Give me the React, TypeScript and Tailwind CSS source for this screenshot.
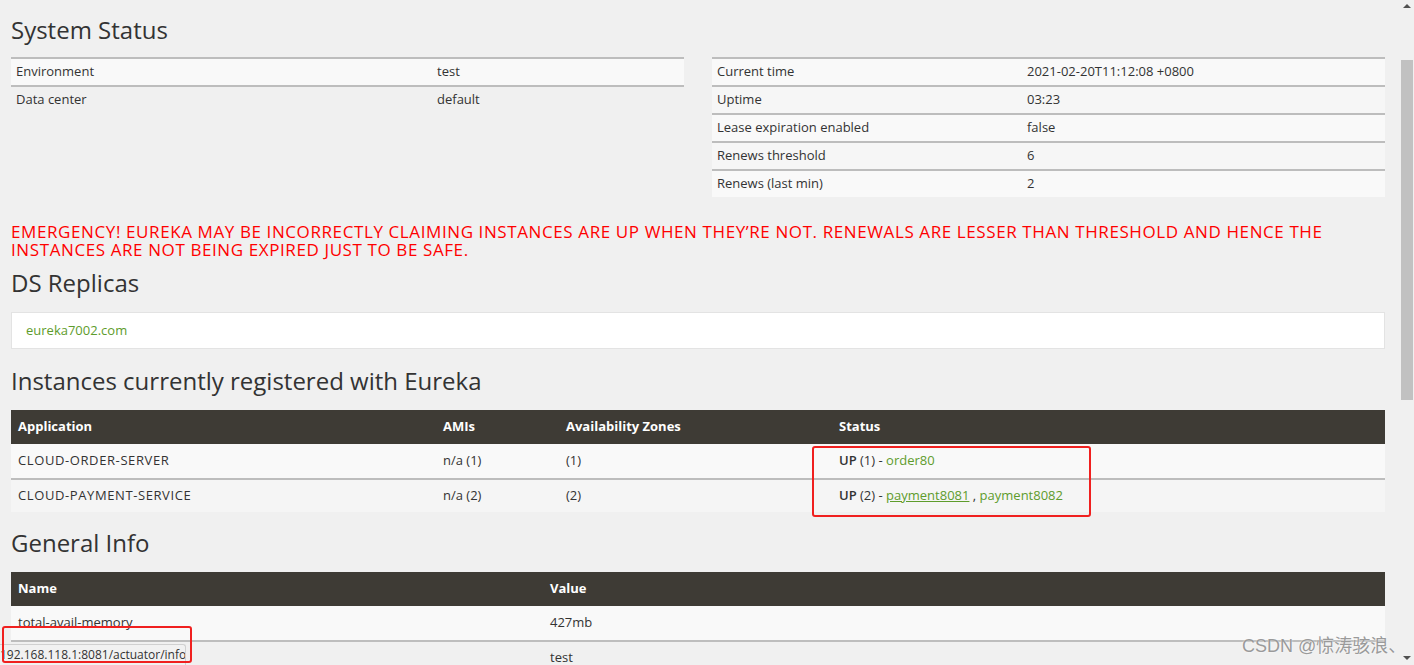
const green = "text-[#5e9c2c]";

type Pair = [string, string];

const leftInfo: Pair[] = [
	["Environment", "test"],
	["Data center", "default"],
];

const rightInfo: Pair[] = [
	["Current time", "2021-02-20T11:12:08 +0800"],
	["Uptime", "03:23"],
	["Lease expiration enabled", "false"],
	["Renews threshold", "6"],
	["Renews (last min)", "2"],
];

const Heading = ({ children }: { children: React.ReactNode }) => (
	<h2 className="text-[24px] leading-[24px] text-[#333] font-['Open_Sans',sans-serif]">
		{children}
	</h2>
);

const KeyValueTable = ({
	rows,
	keyWidth,
	stripeAll,
}: {
	rows: Pair[];
	keyWidth: string;
	stripeAll?: boolean;
}) => (
	<div className="flex-1 flex flex-col">
		{rows.map(([k, v], i) => (
			<div
				key={k}
				className={`flex h-[28px] items-center border-t-2 border-[#bdbdbd] text-[13px] text-[#333] ${
					i % 2 === 0 ? "bg-[#f9f9f9]" : stripeAll ? "bg-[#f6f6f6]" : ""
				}`}
			>
				<div className={`${keyWidth} pl-[5px]`}>{k}</div>
				<div className="flex-1 pl-[5px]">{v}</div>
			</div>
		))}
	</div>
);

const DarkHeader = ({ cols }: { cols: { label: string; w: string }[] }) => (
	<div className="flex h-[34px] items-center bg-[#3e3b35] text-[13px] font-bold text-white">
		{cols.map((c) => (
			<div key={c.label} className={`${c.w} pl-[7px]`}>
				{c.label}
			</div>
		))}
	</div>
);

export default function App() {
	return (
		<div className="relative flex h-[665px] w-[1414px] overflow-hidden bg-[#f0f0f0] font-['Open_Sans',sans-serif]">
			<main className="flex-1 pl-[11px] pr-[15px] pt-[18px]">
				<Heading>System Status</Heading>

				<div className="mt-[15px] flex gap-[28px]">
					<KeyValueTable rows={leftInfo} keyWidth="w-[421px]" />
					<KeyValueTable rows={rightInfo} keyWidth="w-[310px]" stripeAll />
				</div>

				<p className="mt-[26px] whitespace-nowrap text-[17px] font-medium leading-[18px] tracking-[0.6px] text-[#ff0000] font-['Open_Sans',sans-serif]">
					EMERGENCY! EUREKA MAY BE INCORRECTLY CLAIMING INSTANCES ARE UP WHEN
					THEY’RE NOT. RENEWALS ARE LESSER THAN THRESHOLD AND HENCE THE
					<br />
					INSTANCES ARE NOT BEING EXPIRED JUST TO BE SAFE.
				</p>

				<div className="mt-[12px]">
					<Heading>DS Replicas</Heading>
				</div>
				<div className="mt-[17px] flex h-[37px] items-center border border-[#e3e3e3] bg-white pl-[14px] text-[13px]">
					<a className={green}>eureka7002.com</a>
				</div>

				<div className="mt-[20px]">
					<Heading>Instances currently registered with Eureka</Heading>
				</div>
				<div className="mt-[17px]">
					<DarkHeader
						cols={[
							{ label: "Application", w: "w-[425px]" },
							{ label: "AMIs", w: "w-[123px]" },
							{ label: "Availability Zones", w: "w-[273px]" },
							{ label: "Status", w: "flex-1" },
						]}
					/>
					<div className="flex h-[34px] items-center bg-[#f9f9f9] text-[13px] text-[#333]">
						<div className="w-[425px] pl-[7px] font-medium tracking-[0.6px]">CLOUD-ORDER-SERVER</div>
						<div className="w-[123px] pl-[7px]">n/a (1)</div>
						<div className="w-[273px] pl-[7px]">(1)</div>
						<div className="flex-1 pl-[7px]">
							<b className="font-semibold">UP</b> (1) -{" "}
							<a className={green}>order80</a>
						</div>
					</div>
					<div className="flex h-[34px] items-center border-t-2 border-[#bdbdbd] bg-[#f5f5f5] text-[13px] text-[#333]">
						<div className="w-[425px] pl-[7px] font-medium tracking-[0.6px]">CLOUD-PAYMENT-SERVICE</div>
						<div className="w-[123px] pl-[7px]">n/a (2)</div>
						<div className="w-[273px] pl-[7px]">(2)</div>
						<div className="flex-1 pl-[7px]">
							<b className="font-semibold">UP</b> (2) -{" "}
							<a className={`${green} underline`}>payment8081</a> ,{" "}
							<a className={green}>payment8082</a>
						</div>
					</div>
				</div>

				<div className="mt-[19px]">
					<Heading>General Info</Heading>
				</div>
				<div className="mt-[17px]">
					<DarkHeader
						cols={[
							{ label: "Name", w: "w-[532px]" },
							{ label: "Value", w: "flex-1" },
						]}
					/>
					<div className="flex h-[34px] items-center bg-[#f9f9f9] text-[13px] text-[#333]">
						<div className="w-[532px] pl-[7px]">total-avail-memory</div>
						<div className="flex-1 pl-[7px]">427mb</div>
					</div>
					<div className="flex h-[34px] items-center border-t-2 border-[#bdbdbd] text-[13px] text-[#333]">
						<div className="w-[532px] pl-[7px]" />
						<div className="flex-1 pl-[7px]">test</div>
					</div>
				</div>
			</main>

			{/* fake scrollbar */}
			<div className="flex w-[14px] flex-col items-center bg-[#f0f0f0]">
				<div className="mt-[4px] h-0 w-0 border-x-[4px] border-b-[4px] border-x-transparent border-b-[#505050]" />
				<div className="mt-[52px] h-[340px] w-[12px] bg-[#c1c1c1]" />
				<div className="flex-1" />
				<div className="mb-[5px] h-0 w-0 border-x-[4px] border-t-[4px] border-x-transparent border-t-[#505050]" />
			</div>

			{/* browser status bar */}
			<div className="absolute bottom-0 left-0 flex h-[21px] w-[186px] items-center overflow-hidden rounded-tr-[3px] border-r border-t border-[#d0d0d0] bg-[#f1f1f1] text-[12px] text-[#333]">
				<span className="whitespace-nowrap">192.168.118.1:8081/actuator/info</span>
			</div>

			{/* annotation boxes */}
			<div className="absolute left-[812px] top-[446px] h-[71px] w-[279px] rounded-[3px] border-2 border-[#f0201f]" />
			<div className="absolute left-[2px] top-[626px] h-[37px] w-[190px] rounded-[3px] border-2 border-[#f0201f]" />

			{/* watermark */}
			<div className="absolute left-[1242px] top-[634px] text-[18px] leading-[24px] text-[#9a9a9a] [text-shadow:0_0_2px_#fff] font-['Liberation_Sans','Noto_Sans_CJK_SC',sans-serif]">
				CSDN @惊涛骇浪、
			</div>
		</div>
	);
}
